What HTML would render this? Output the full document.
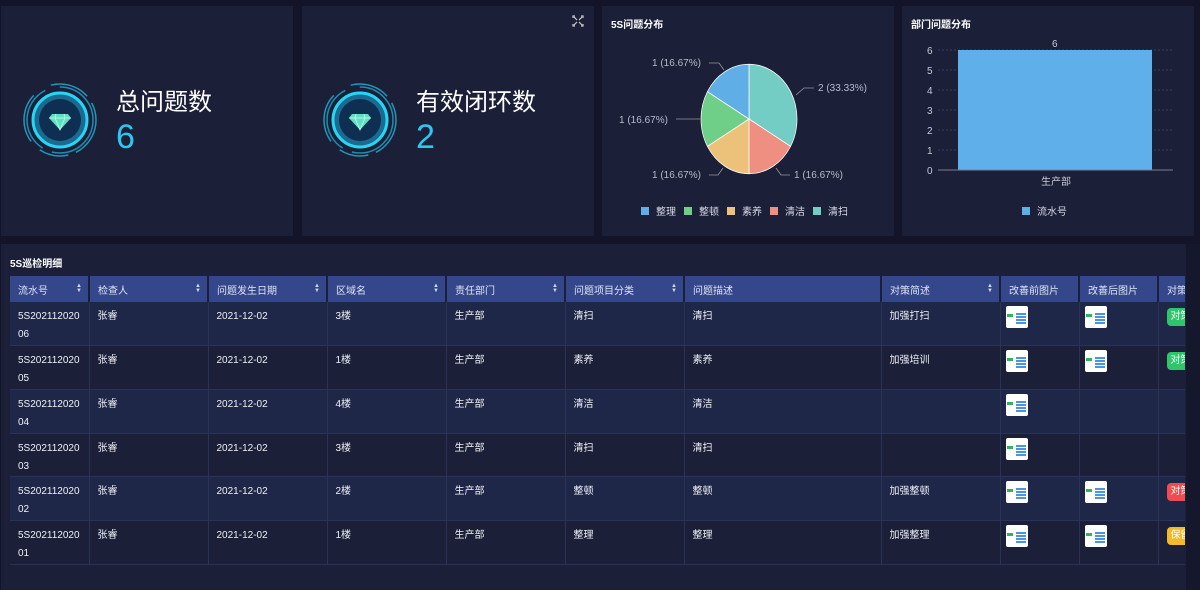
<!DOCTYPE html>
<html><head><meta charset="utf-8"><style>
*{margin:0;padding:0;box-sizing:border-box}
body{width:1200px;height:590px;background:#13142a;font-family:"Liberation Sans","Noto Sans CJK SC",sans-serif;color:#e8eaf2;position:relative;overflow:hidden}
.p{position:absolute;background:#1b1f38}
.t{position:absolute;font-size:10px;font-weight:bold;color:#fff}
.tw{position:absolute;left:10px;top:276px;width:1175px;height:314px;overflow:hidden}
table{border-collapse:collapse;font-size:10px;table-layout:fixed;width:1209px}
th{background:#34478a;height:26px;text-align:left;font-weight:normal;padding:0 8px;border-right:2px solid #1b1f38;color:#dfe4f5;position:relative;white-space:nowrap;overflow:hidden}
th .s{position:absolute;right:6px;top:8px;font-size:6px;color:#cfd6ee;line-height:5px}
td{height:43.7px;vertical-align:top;padding:6px 8px 0;border-right:1px solid #2a3258;border-bottom:1px solid #2a3258;line-height:18px;color:#f0f0f5;overflow:hidden}
tr.a td{background:#1f2748}
tr.b td{background:#1b1f38}
.im{display:block;width:22px;height:22px;background:#fff;border-radius:2px;margin:-2px 0 0 -3px;position:relative;overflow:hidden}
.im i{position:absolute;left:10px;top:7px;width:10px;height:12px;background:repeating-linear-gradient(#4a95e0 0 2px,#fff 2px 3px)}
.im b{position:absolute;left:1px;top:8px;width:6px;height:3px;background:#2fb55a}
.tag{display:inline-block;color:#fff;border-radius:4px;padding:0 4px;height:18px;margin-top:-1px;white-space:nowrap}
</style></head><body>
<div class="p" style="left:1px;top:6px;width:292px;height:230px"></div>
<div class="p" style="left:302px;top:6px;width:292px;height:230px"></div>
<div class="p" style="left:602px;top:6px;width:292px;height:230px"></div>
<div class="p" style="left:902px;top:6px;width:292px;height:230px"></div>
<div class="p" style="left:1px;top:244px;width:1193px;height:346px"></div>
<div style="position:absolute;left:1186px;top:244px;width:14px;height:346px;background:#15172c"></div>

<svg style="position:absolute;left:0;top:0" width="600" height="240">
<defs><g id="g">
<circle r="36" fill="none" stroke="#1fb6d8" stroke-width="1.5" stroke-dasharray="40 8 30 12 50 20" opacity=".8"/>
<circle r="33" fill="none" stroke="#1a8fb0" stroke-width="1.5" stroke-dasharray="60 10 70 15"/>
<circle r="27" fill="#1b6a90" stroke="#27d6f5" stroke-width="3"/>
<circle r="21" fill="#0e2e52"/>
<path d="M-8,-6 L8,-6 L11,-2 L0,10 L-11,-2Z" fill="#5fe0c0"/>
<path d="M-11,-2 L11,-2 M-4,-6 L-5,-2 L0,10 L5,-2 L4,-6" stroke="#c8fff0" stroke-width=".8" fill="none"/>
</g></defs>
<use href="#g" x="60" y="120"/><use href="#g" x="360" y="120"/>
<g stroke="#ccc" stroke-width="1.2" fill="none"><path d="M573,18v-2h2M581,16h2v2M583,24v2h-2M575,26h-2v-2M574,17l3,3M582,17l-3,3M574,25l3-3M582,25l-3-3"/></g>
</svg>
<div style="position:absolute;left:116px;top:82px;font-size:24px;color:#fff">总问题数</div>
<div style="position:absolute;left:116px;top:118px;font-size:34px;color:#2bc8f2">6</div>
<div style="position:absolute;left:416px;top:82px;font-size:24px;color:#fff">有效闭环数</div>
<div style="position:absolute;left:416px;top:118px;font-size:34px;color:#2bc8f2">2</div>

<div class="t" style="left:611px;top:16px">5S问题分布</div>
<div class="t" style="left:911px;top:16px">部门问题分布</div>
<svg style="position:absolute;left:600px;top:0" width="600" height="240" font-family="Liberation Sans,sans-serif" font-size="10" fill="#b8bbc8">
<g transform="translate(149,119) scale(1,1.14)" stroke="#fff" stroke-width=".7">
<path d="M0,0 L0,-48 A48,48 0 0 1 41.6,24Z" fill="#73cdc4"/>
<path d="M0,0 L41.6,24 A48,48 0 0 1 0,48Z" fill="#ee8f82"/>
<path d="M0,0 L0,48 A48,48 0 0 1 -41.6,24Z" fill="#ecc27a"/>
<path d="M0,0 L-41.6,24 A48,48 0 0 1 -41.6,-24Z" fill="#6fcf89"/>
<path d="M0,0 L-41.6,-24 A48,48 0 0 1 0,-48Z" fill="#5fafe6"/>
</g>
<g stroke="#999" fill="none" stroke-width=".8"><path d="M109,63h10l5,7M196,95l8,-7h10M76,119h24M109,175h9l5,-7M176,168l5,7h9"/></g>
<text x="52" y="66">1 (16.67%)</text><text x="218" y="91">2 (33.33%)</text>
<text x="19" y="123">1 (16.67%)</text><text x="52" y="178">1 (16.67%)</text><text x="194" y="178">1 (16.67%)</text>
<g font-size="10" fill="#d8dae6">
<rect x="41" y="207" width="8" height="8" fill="#5fafe6"/><text x="56" y="215">整理</text>
<rect x="84" y="207" width="8" height="8" fill="#6fcf89"/><text x="99" y="215">整顿</text>
<rect x="127" y="207" width="8" height="8" fill="#ecc27a"/><text x="142" y="215">素养</text>
<rect x="170" y="207" width="8" height="8" fill="#ee8f82"/><text x="185" y="215">清洁</text>
<rect x="213" y="207" width="8" height="8" fill="#73cdc4"/><text x="228" y="215">清扫</text>
<rect x="422" y="207" width="8" height="8" fill="#5fafe6"/><text x="437" y="215">流水号</text>
</g>
<g stroke="#3a4060" stroke-dasharray="2 2"><path d="M338,50h235M338,70h235M338,90h235M338,110h235M338,130h235M338,150h235"/></g>
<rect x="358" y="50" width="194" height="120" fill="#5fafeb"/>
<path d="M338,170h235" stroke="#7a7f95"/>
<g fill="#c8cad6"><text x="327" y="54">6</text><text x="327" y="74">5</text><text x="327" y="94">4</text><text x="327" y="114">3</text><text x="327" y="134">2</text><text x="327" y="154">1</text><text x="327" y="174">0</text>
<text x="452" y="47">6</text><text x="441" y="185">生产部</text></g>
</svg>

<div class="t" style="left:10px;top:255px">5S巡检明细</div>
<div class="tw">
<table>
<colgroup><col style="width:79px"><col style="width:119px"><col style="width:119px"><col style="width:119px"><col style="width:119px"><col style="width:119px"><col style="width:197px"><col style="width:119px"><col style="width:79px"><col style="width:79px"><col style="width:61px"></colgroup>
<tr><th>流水号<span class="s">▲<br>▼</span></th><th>检查人<span class="s">▲<br>▼</span></th><th>问题发生日期<span class="s">▲<br>▼</span></th><th>区域名<span class="s">▲<br>▼</span></th><th>责任部门<span class="s">▲<br>▼</span></th><th>问题项目分类<span class="s">▲<br>▼</span></th><th>问题描述</th><th>对策简述<span class="s">▲<br>▼</span></th><th>改善前图片</th><th>改善后图片</th><th>对策状态</th></tr>
<tr class="a"><td>5S202112020<br>06</td><td>张睿</td><td>2021-12-02</td><td>3楼</td><td>生产部</td><td>清扫</td><td>清扫</td><td>加强打扫</td><td><span class="im"><b></b><i></i></span></td><td><span class="im"><b></b><i></i></span></td><td><span class="tag" style="background:#2fc56a">对策完成</span></td></tr>
<tr class="b"><td>5S202112020<br>05</td><td>张睿</td><td>2021-12-02</td><td>1楼</td><td>生产部</td><td>素养</td><td>素养</td><td>加强培训</td><td><span class="im"><b></b><i></i></span></td><td><span class="im"><b></b><i></i></span></td><td><span class="tag" style="background:#2fc56a">对策完成</span></td></tr>
<tr class="a"><td>5S202112020<br>04</td><td>张睿</td><td>2021-12-02</td><td>4楼</td><td>生产部</td><td>清洁</td><td>清洁</td><td></td><td><span class="im"><b></b><i></i></span></td><td></td><td></td></tr>
<tr class="b"><td>5S202112020<br>03</td><td>张睿</td><td>2021-12-02</td><td>3楼</td><td>生产部</td><td>清扫</td><td>清扫</td><td></td><td><span class="im"><b></b><i></i></span></td><td></td><td></td></tr>
<tr class="a"><td>5S202112020<br>02</td><td>张睿</td><td>2021-12-02</td><td>2楼</td><td>生产部</td><td>整顿</td><td>整顿</td><td>加强整顿</td><td><span class="im"><b></b><i></i></span></td><td><span class="im"><b></b><i></i></span></td><td><span class="tag" style="background:#ef4c50">对策未完</span></td></tr>
<tr class="b"><td>5S202112020<br>01</td><td>张睿</td><td>2021-12-02</td><td>1楼</td><td>生产部</td><td>整理</td><td>整理</td><td>加强整理</td><td><span class="im"><b></b><i></i></span></td><td><span class="im"><b></b><i></i></span></td><td><span class="tag" style="background:#f1b92c">保留</span></td></tr>
</table>
</div>
</body></html>
